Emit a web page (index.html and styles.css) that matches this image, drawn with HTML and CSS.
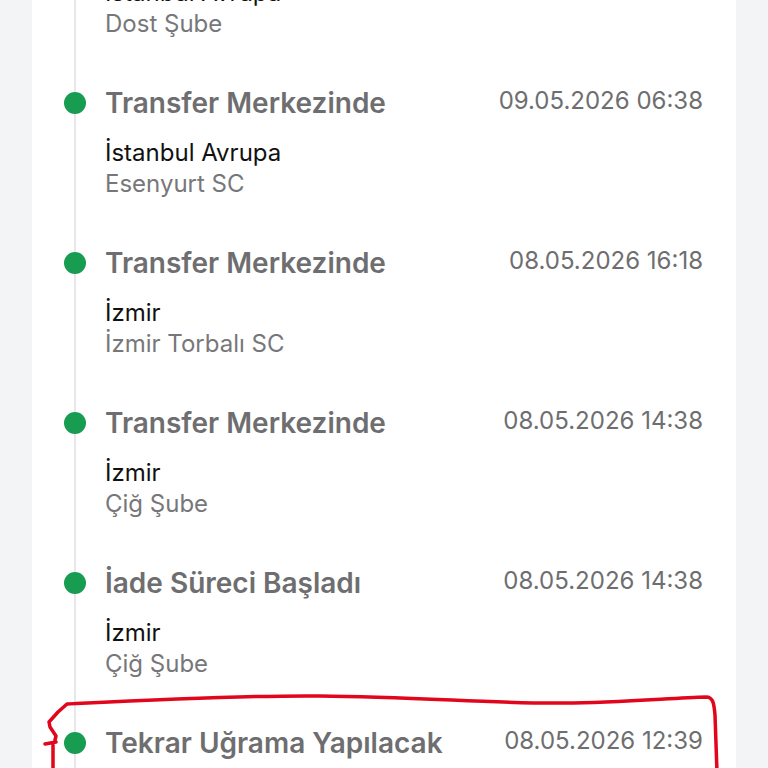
FILE: index.html
```html
<!DOCTYPE html>
<html lang="tr">
<head>
<meta charset="utf-8">
<link rel="stylesheet" href="styles.css">
</head>
<body>
<div class="card">
  <ul class="timeline">
    <li class="item">
      <div class="head"><span class="title">Transfer Merkezinde</span><span class="date">09.05.2026 08:12</span></div>
      <div class="loc">İstanbul Avrupa</div>
      <div class="branch">Dost Şube</div>
    </li>
    <li class="item">
      <div class="head"><span class="title">Transfer Merkezinde</span><span class="date">09.05.2026 06:38</span></div>
      <div class="loc">İstanbul Avrupa</div>
      <div class="branch">Esenyurt SC</div>
    </li>
    <li class="item">
      <div class="head"><span class="title">Transfer Merkezinde</span><span class="date">08.05.2026 16:18</span></div>
      <div class="loc">İzmir</div>
      <div class="branch">İzmir Torbalı SC</div>
    </li>
    <li class="item">
      <div class="head"><span class="title">Transfer Merkezinde</span><span class="date">08.05.2026 14:38</span></div>
      <div class="loc">İzmir</div>
      <div class="branch">Çiğ Şube</div>
    </li>
    <li class="item">
      <div class="head"><span class="title">İade Süreci Başladı</span><span class="date">08.05.2026 14:38</span></div>
      <div class="loc">İzmir</div>
      <div class="branch">Çiğ Şube</div>
    </li>
    <li class="item">
      <div class="head"><span class="title">Tekrar Uğrama Yapılacak</span><span class="date">08.05.2026 12:39</span></div>
      <div class="loc">İzmir</div>
      <div class="branch">Çiğ Şube</div>
    </li>
  </ul>
</div>
<svg class="mark" width="768" height="768" viewBox="0 0 768 768">
  <path d="M53 772 L53 745 M45 744 L56 742 M55 740 L56 736 L50 727 L49 722 L58 712 L67 704 C 150 700, 250 695, 320 696 C 420 697, 500 704, 564 703 C 620 703, 670 698, 706 697 C 713 697, 714 703, 715 715 L 717 772" fill="none" stroke="#e2061d" stroke-width="3.5" stroke-linecap="round" stroke-linejoin="round"/>
</svg>
</body>
</html>
```
FILE: styles.css
```css
html, body {
  margin: 0;
  padding: 0;
  background: #f3f4f6;
  font-family: Inter, "Noto Sans", sans-serif;
  overflow: hidden;
  height: 768px;
}
.card {
  margin: -73px 32px 0 32px;
  background: #ffffff;
  padding: 0 33px 0 0;
}
.timeline {
  list-style: none;
  margin: 0;
  padding: 0 0 0 73px;
  position: relative;
}
.timeline::before {
  content: "";
  position: absolute;
  left: 42px;
  top: 0;
  bottom: 0;
  width: 2px;
  background: #e5e7eb;
}
.item {
  position: relative;
  padding: 0 0 49px 0;
}
.item::before {
  content: "";
  position: absolute;
  left: -41px;
  top: 5px;
  width: 22px;
  height: 22px;
  border-radius: 50%;
  background: #179c52;
}
.head {
  display: flex;
  justify-content: space-between;
  align-items: center;
  height: 32px;
  margin-bottom: 19px;
}
.title {
  font-size: 28px;
  font-weight: 600;
  color: #6e6e70;
  line-height: 32px;
}
.date {
  font-size: 24px;
  color: #6e6e70;
  line-height: 32px;
  position: relative;
  top: -2px;
}
.loc, .branch {
  font-size: 24px;
  line-height: 30px;
}
.loc {
  color: #111111;
}
.branch {
  color: #77777a;
  position: relative;
  top: 1px;
}
.mark {
  position: absolute;
  left: 0;
  top: 0;
  pointer-events: none;
}
```
